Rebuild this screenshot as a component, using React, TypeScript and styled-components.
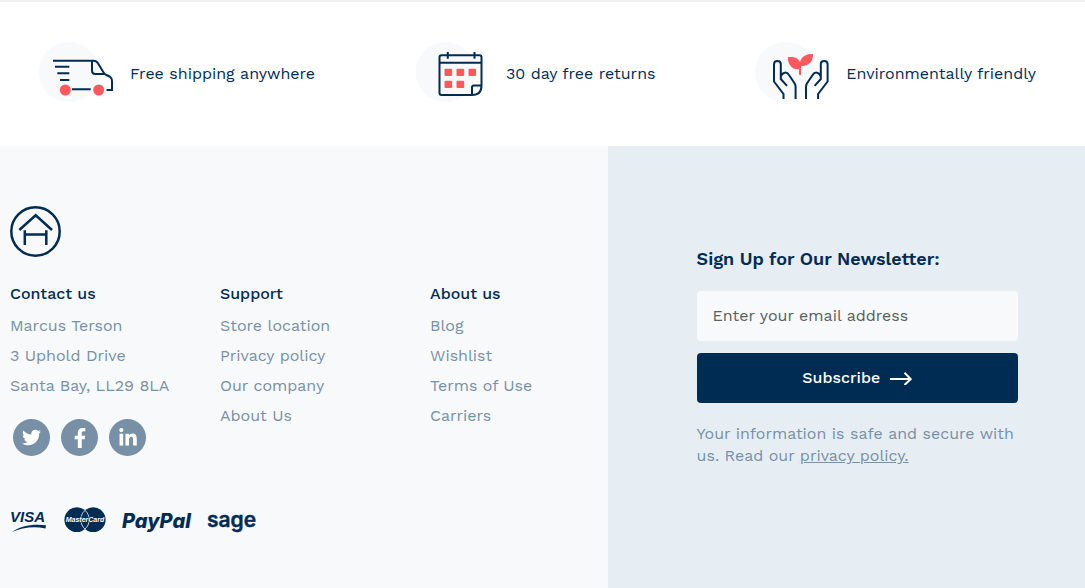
import React from "react";
import styled, { createGlobalStyle } from "styled-components";
import { FaTwitter, FaFacebookF, FaLinkedinIn } from "react-icons/fa";

const navy = "#002c54";
const slate = "#7890a5";
const coral = "#ff595e";
const mist = "#f7f9fb";
const sky = "#e6eef4";

const GlobalStyle = createGlobalStyle`
  *, *::before, *::after { box-sizing: border-box; }
  body {
    margin: 0;
    background: #fff;
    color: ${navy};
    font-family: "Work Sans", Inter, "Liberation Sans", sans-serif;
    font-size: 16px;
    line-height: 22px;
  }
`;

const Page = styled.div`
  display: flex;
  flex-direction: column;
  min-height: 100vh;
`;

const Features = styled.ul`
  display: flex;
  flex-wrap: wrap;
  justify-content: space-between;
  gap: 20px;
  margin: 0;
  padding: 40px 49px 44px 39px;
  list-style: none;
  border-top: 2px solid #f0f1f3;
`;

const Feature = styled.li`
  display: flex;
  align-items: center;
  gap: 15px;
`;

const FeatureLabel = styled.span`
  padding-top: 4px;
`;

const FeatureArt = styled.svg`
  display: block;
  width: 76px;
  height: 60px;
  fill: none;
  stroke: ${navy};
  stroke-width: 2;
`;

const Footer = styled.footer`
  display: grid;
  grid-template-columns: 56fr 44fr;
  flex: 1;
`;

const Info = styled.div`
  padding: 60px 10px 55px;
  background: ${mist};
`;

const HomeLink = styled.a`
  display: block;
  width: 51px;
  margin-bottom: 26px;

  svg { display: block; }
`;

const Columns = styled.div`
  display: grid;
  grid-template-columns: 210px 210px 1fr;
`;

const ColumnTitle = styled.h2`
  margin: 0 0 6px;
  font-size: 16px;
  font-weight: 500;
  line-height: 22px;
`;

const Lines = styled.ul`
  margin: 0;
  padding: 0;
  list-style: none;
  color: ${slate};
  line-height: 30px;
`;

const ColumnLink = styled.a`
  color: inherit;
  text-decoration: none;
`;

const Socials = styled.div`
  display: flex;
  gap: 11px;
  margin: 18px 0 0 3px;
`;

const SocialLink = styled.a`
  display: grid;
  place-items: center;
  width: 37px;
  height: 37px;
  border-radius: 50%;
  background: ${slate};
  color: #fff;
`;

const Payments = styled.div`
  display: flex;
  align-items: flex-start;
  gap: 16px;
  margin-top: 51px;

  svg { display: block; fill: ${navy}; }
`;

const Newsletter = styled.form`
  display: flex;
  flex-direction: column;
  padding: 102px 67px 40px 89px;
  background: ${sky};
`;

const NewsletterTitle = styled.label`
  margin-bottom: 21px;
  font-size: 18px;
  font-weight: 600;
`;

const EmailInput = styled.input`
  width: 100%;
  height: 50px;
  margin-bottom: 12px;
  padding: 0 16px 2px;
  border: 0;
  border-radius: 4px;
  background: ${mist};
  color: ${navy};
  font: inherit;

  &::placeholder { color: #5a5d61; opacity: 1; }
`;

const SubscribeButton = styled.button`
  display: flex;
  align-items: center;
  justify-content: center;
  gap: 10px;
  height: 50px;
  margin-bottom: 20px;
  border: 0;
  border-radius: 4px;
  background: ${navy};
  color: #fff;
  font: inherit;
  font-weight: 500;
  cursor: pointer;
`;

const Notice = styled.p`
  margin: 0;
  color: ${slate};

  a { color: inherit; }
`;

function TruckArt() {
  return (
    <FeatureArt viewBox="0 0 76 60" aria-hidden="true">
      <circle cx="30" cy="30" r="30" fill={mist} stroke="none" />
      <path d="M14 18.7H54.5C57 18.7 58 19.5 59 21.3L65 31.3C66 33 69 33.2 71.5 35.2C73 36.5 73 37.5 73 39V48H67.5" />
      <path d="M53 18.7V28.5Q53 32 56.5 32H66M16 24.7H30.3M18.3 31.3H30.3M21 38H30.3M33 47.3H51.7" />
      <g fill={coral} stroke="none">
        <circle cx="26.3" cy="48" r="5.5" />
        <circle cx="59.7" cy="48" r="5.5" />
      </g>
    </FeatureArt>
  );
}

function CalendarArt() {
  const days = [[29.5, 26.7], [41.5, 26.7], [53.5, 26.7], [29.5, 38.7], [41.5, 38.7]];
  return (
    <FeatureArt viewBox="0 0 76 60" aria-hidden="true">
      <circle cx="30.5" cy="30" r="30" fill={mist} stroke="none" />
      <path d="M57 53H26.5Q24.5 53 24.5 51V15.3Q24.5 13.3 26.5 13.3H64.5Q66.5 13.3 66.5 15.3V43.5Q66.5 53 57 53V45.5Q57 43.5 59 43.5H66.5M24.5 20.7H66.5M32.8 10V16.7M59.5 10V16.7" />
      {days.map(([x, y]) => (
        <rect key={`${x}-${y}`} x={x} y={y} width="7.6" height="7.4" rx="1" fill={coral} stroke="none" />
      ))}
    </FeatureArt>
  );
}

function HandsArt() {
  const hand =
    "M28.5 57V52L19 39.5V22.3C19 17.8 25.8 17.8 25.8 22.3V37L32 43.8M25.8 34.5C27.5 29.5 32 29.7 34 33L39.7 41.5Q40.6 43 40.6 45V57";
  return (
    <FeatureArt viewBox="0 0 76 60" aria-hidden="true">
      <circle cx="30" cy="30" r="30" fill={mist} stroke="none" />
      <path d={hand} />
      <path d={hand} transform="matrix(-1 0 0 1 91.6 0)" />
      <path
        d="M44 33V27.2C37 27.8 32.5 22.5 33 15.2C39 14.5 43.5 16.3 45 20.3C46.3 14.2 51.5 11.6 58 12C58.4 19.5 53.5 24.3 46 23.9V33Z"
        fill={coral}
        stroke="none"
      />
    </FeatureArt>
  );
}

function HouseMark() {
  return (
    <svg width="51" height="51" viewBox="0 0 51 51" fill="none" stroke={navy} strokeWidth="2.5" aria-hidden="true">
      <circle cx="25.5" cy="25.5" r="24.2" />
      <path d="M9.3 24L25.7 9.3L42 24M14.8 24.3V39M36.3 24.3V39M14.8 28.4H36.3" />
    </svg>
  );
}

function ArrowIcon() {
  return (
    <svg width="22" height="14" viewBox="0 0 22 14" fill="none" stroke="#fff" strokeWidth="2" aria-hidden="true">
      <path d="M0 8H20.5M14.5 1.8L20.7 8L14.5 14" />
    </svg>
  );
}

function VisaMark() {
  return (
    <svg width="38" height="26" viewBox="0 0 38 26" overflow="visible">
      <text x="0" y="15" fontFamily="Liberation Sans, sans-serif" fontSize="15" fontWeight="700" fontStyle="italic">VISA</text>
      <path d="M2 25C11 18.5 23 16.8 36 18.3L35.5 21.5C24 19 12 20.5 2 25Z" />
    </svg>
  );
}

function MasterCardMark() {
  return (
    <svg width="42" height="26" viewBox="0 0 42 26">
      <circle cx="12.8" cy="12.7" r="12.4" />
      <circle cx="29.2" cy="12.7" r="12.4" />
      <path d="M21 3.4C15.5 8 15.5 17.5 21 22C26.5 17.5 26.5 8 21 3.4Z" fill="none" stroke={mist} strokeWidth="0.8" />
      <text x="21" y="15.4" textAnchor="middle" fill="#fff" stroke={navy} strokeWidth="1" paintOrder="stroke" fontFamily="Liberation Sans, sans-serif" fontSize="7" fontWeight="700" fontStyle="italic">MasterCard</text>
    </svg>
  );
}

function PayPalMark() {
  return (
    <svg width="69" height="26" viewBox="0 0 69 26" overflow="visible">
      <text x="0" y="21" fontFamily="Inter, sans-serif" fontSize="20" fontWeight="800" fontStyle="italic">PayPal</text>
    </svg>
  );
}

function SageMark() {
  return (
    <svg width="48" height="26" viewBox="0 0 48 26" overflow="visible">
      <text x="0" y="20" stroke={navy} strokeWidth="0.4" fontFamily="Inter, sans-serif" fontSize="21" fontWeight="600">sage</text>
    </svg>
  );
}

function LinkColumn({ title, items }: { title: string; items: string[] }) {
  return (
    <div>
      <ColumnTitle>{title}</ColumnTitle>
      <Lines>
        {items.map((item) => (
          <li key={item}><ColumnLink href="#">{item}</ColumnLink></li>
        ))}
      </Lines>
    </div>
  );
}

export default function App() {
  return (
    <Page>
      <GlobalStyle />
      <Features>
        <Feature><TruckArt /><FeatureLabel>Free shipping anywhere</FeatureLabel></Feature>
        <Feature><CalendarArt /><FeatureLabel>30 day free returns</FeatureLabel></Feature>
        <Feature><HandsArt /><FeatureLabel>Environmentally friendly</FeatureLabel></Feature>
      </Features>
      <Footer>
        <Info>
          <HomeLink href="#" aria-label="Home"><HouseMark /></HomeLink>
          <Columns>
            <div>
              <ColumnTitle>Contact us</ColumnTitle>
              <Lines>
                <li>Marcus Terson</li>
                <li>3 Uphold Drive</li>
                <li>Santa Bay, LL29 8LA</li>
              </Lines>
              <Socials>
                <SocialLink href="#" aria-label="Twitter"><FaTwitter size={19} /></SocialLink>
                <SocialLink href="#" aria-label="Facebook"><FaFacebookF size={20} /></SocialLink>
                <SocialLink href="#" aria-label="LinkedIn"><FaLinkedinIn size={20} /></SocialLink>
              </Socials>
            </div>
            <LinkColumn title="Support" items={["Store location", "Privacy policy", "Our company", "About Us"]} />
            <LinkColumn title="About us" items={["Blog", "Wishlist", "Terms of Use", "Carriers"]} />
          </Columns>
          <Payments>
            <VisaMark />
            <MasterCardMark />
            <PayPalMark />
            <SageMark />
          </Payments>
        </Info>
        <Newsletter onSubmit={(event) => event.preventDefault()}>
          <NewsletterTitle htmlFor="email">Sign Up for Our Newsletter:</NewsletterTitle>
          <EmailInput id="email" type="email" placeholder="Enter your email address" />
          <SubscribeButton type="submit">Subscribe<ArrowIcon /></SubscribeButton>
          <Notice>
            Your information is safe and secure with us. Read our <a href="#">privacy policy.</a>
          </Notice>
        </Newsletter>
      </Footer>
    </Page>
  );
}
